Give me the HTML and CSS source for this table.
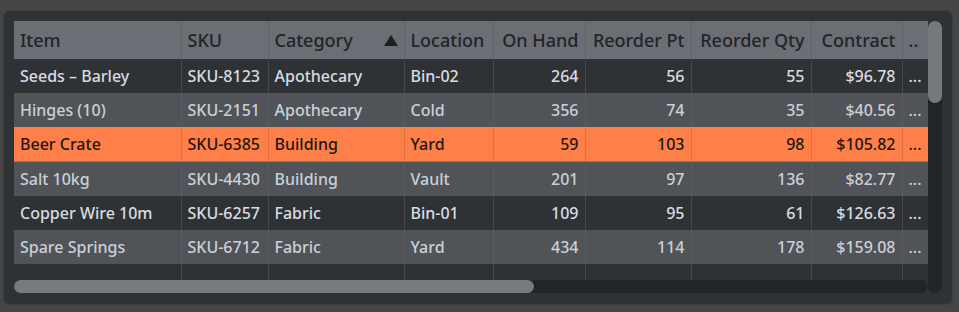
FILE: index.html
```html
<!DOCTYPE html>
<html>
<head>
<meta charset="utf-8">
<link rel="stylesheet" href="styles.css">
</head>
<body>
<div class="panel">
  <div class="viewport">
    <table class="grid">
      <colgroup>
        <col class="c1"><col class="c2"><col class="c3"><col class="c4"><col class="c5"><col class="c6"><col class="c7"><col class="c8"><col class="c9">
      </colgroup>
      <thead>
        <tr>
          <th>Item</th>
          <th>SKU</th>
          <th class="sorted"><div class="th-sort"><span>Category</span><svg class="arrow" width="14" height="11" viewBox="0 0 14 11"><polygon points="7,0 14,11 0,11" fill="#1e1f21"/></svg></div></th>
          <th>Location</th>
          <th class="num">On Hand</th>
          <th class="num">Reorder Pt</th>
          <th class="num">Reorder Qty</th>
          <th class="num">Contract</th>
          <th class="more">..</th>
        </tr>
      </thead>
      <tbody>
        <tr class="dark"><td>Seeds – Barley</td><td>SKU-8123</td><td>Apothecary</td><td>Bin-02</td><td class="num">264</td><td class="num">56</td><td class="num">55</td><td class="num">$96.78</td><td class="more">...</td></tr>
        <tr class="light"><td>Hinges (10)</td><td>SKU-2151</td><td>Apothecary</td><td>Cold</td><td class="num">356</td><td class="num">74</td><td class="num">35</td><td class="num">$40.56</td><td class="more">...</td></tr>
        <tr class="sel"><td>Beer Crate</td><td>SKU-6385</td><td>Building</td><td>Yard</td><td class="num">59</td><td class="num">103</td><td class="num">98</td><td class="num">$105.82</td><td class="more">...</td></tr>
        <tr class="light"><td>Salt 10kg</td><td>SKU-4430</td><td>Building</td><td>Vault</td><td class="num">201</td><td class="num">97</td><td class="num">136</td><td class="num">$82.77</td><td class="more">...</td></tr>
        <tr class="dark"><td>Copper Wire 10m</td><td>SKU-6257</td><td>Fabric</td><td>Bin-01</td><td class="num">109</td><td class="num">95</td><td class="num">61</td><td class="num">$126.63</td><td class="more">...</td></tr>
        <tr class="light"><td>Spare Springs</td><td>SKU-6712</td><td>Fabric</td><td>Yard</td><td class="num">434</td><td class="num">114</td><td class="num">178</td><td class="num">$159.08</td><td class="more">...</td></tr>
        <tr class="filler"><td></td><td></td><td></td><td></td><td></td><td></td><td></td><td></td><td></td></tr>
      </tbody>
    </table>
  </div>
  <div class="vscroll"><div class="vthumb"></div></div>
  <div class="hscroll"><div class="hthumb"></div></div>
</div>
</body>
</html>
```
FILE: styles.css
```css
html, body {
  margin: 0;
  padding: 0;
  background: #454545;
  width: 959px;
  height: 312px;
  overflow: hidden;
}
.panel {
  margin: 10px 0 0 3px;
  width: 950px;
  height: 295px;
  box-sizing: border-box;
  background: #2f3235;
  border-radius: 7px;
  box-shadow: 0 0 0 1px #3c3f42 inset;
  padding: 11px 11px 12px 11px;
  display: grid;
  grid-template-columns: 914px 14px;
  grid-template-rows: 259px 13px;
  font-family: "Noto Sans", "Open Sans", sans-serif;
}
.viewport {
  grid-column: 1;
  grid-row: 1;
  overflow: hidden;
}
.grid {
  border-collapse: collapse;
  table-layout: fixed;
  width: 914px;
}
.c1 { width: 167px; }
.c2 { width: 87px; }
.c3 { width: 136px; }
.c4 { width: 89px; }
.c5 { width: 92px; }
.c6 { width: 106px; }
.c7 { width: 120px; }
.c8 { width: 91px; }
.c9 { width: 26px; }
th, td {
  padding: 0 6px 0 6px;
  white-space: nowrap;
  overflow: hidden;
  text-align: left;
  border-right: 1px solid #45484c;
}
th:last-child, td:last-child { border-right: none; }
th {
  height: 38px;
  background: #6b6e74;
  color: #222427;
  font-size: 18px;
  font-weight: 500;
  border-right-color: #5f6268;
}
th.num, td.num { text-align: right; }
.th-sort {
  display: flex;
  align-items: center;
  justify-content: space-between;
}
.arrow { display: block; margin-right: 0; }
td {
  height: 34px;
  font-size: 16px;
  font-weight: 500;
  color: #d8dce1;
}
.dark td { background: #2f3235; }
.light td { background: #505358; color: #cbd0d6; border-right-color: #595c61; }
.sel td { background: #ff7f48; color: #221813; border-right-color: #e0703f; border-bottom: 1px solid #c9683e; }
.filler td { height: 17px; background: #2f3235; }
.more { padding-left: 6px; padding-right: 0; text-overflow: clip; }
.vscroll {
  grid-column: 2;
  grid-row: 1 / 3;
  background: #222426;
  border-radius: 7px;
  height: 272px;
}
.vthumb {
  height: 82px;
  background: #77787a;
  border-radius: 7px;
}
.hscroll {
  grid-column: 1;
  grid-row: 2;
  background: #222426;
  border-radius: 7px;
  width: 913px;
}
.hthumb {
  width: 520px;
  height: 13px;
  background: #797a7c;
  border-radius: 7px;
}
```
